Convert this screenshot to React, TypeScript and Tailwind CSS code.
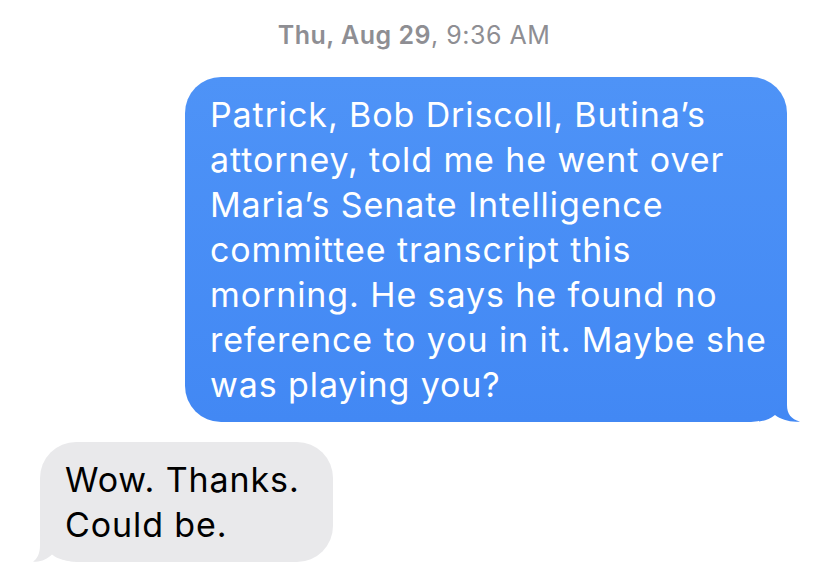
import React from 'react';

const blueLines = [
  'Patrick, Bob Driscoll, Butina\u2019s',
  'attorney, told me he went over',
  'Maria\u2019s Senate Intelligence',
  'committee transcript this',
  'morning. He says he found no',
  'reference to you in it. Maybe she',
  'was playing you?',
];

const grayLines = ['Wow. Thanks.', 'Could be.'];

// Outgoing bubble: blue, right aligned, tail at bottom right
const SentBubble = ({ lines }: { lines: string[] }) => (
  <div className="relative self-end mr-[41px] w-[602px]">
    <svg className="absolute right-[-14px] bottom-0" width="42" height="44" viewBox="0 0 42 44">
      <path d="M0 0 H28 V27 C28 36 32 41 41 43.5 C31 44.5 22 41.5 16 37 C11 41 5 43 0 43.5 Z" fill="#4288f4" />
    </svg>
    <div className="relative rounded-[36px] bg-gradient-to-b from-[#4e93f7] to-[#4288f4] px-[25px] py-[15px] text-white">
      {lines.map((l, i) => (
        <div key={i} className="whitespace-nowrap">{l}</div>
      ))}
    </div>
  </div>
);

// Incoming bubble: gray, left aligned, tail at bottom left
const ReceivedBubble = ({ lines }: { lines: string[] }) => (
  <div className="relative self-start ml-[40px] w-[293px]">
    <svg className="absolute left-[-8px] bottom-0" width="42" height="44" viewBox="0 0 42 44">
      <path d="M42 0 H8 V27 C8 36 5 41 1 43.5 C9 44.5 15 41 20 36.5 C25 41 34 43 42 43.5 Z" fill="#e9e9eb" />
    </svg>
    <div className="relative rounded-[36px] bg-[#e9e9eb] px-[25px] py-[15px] text-black">
      {lines.map((l, i) => (
        <div key={i} className="whitespace-nowrap">{l}</div>
      ))}
    </div>
  </div>
);

export default function App() {
  return (
    <div
      className="w-[828px] h-[579px] bg-white flex flex-col overflow-hidden"
      style={{ fontFamily: 'Inter, "Liberation Sans", sans-serif' }}
    >
      <div className="pt-[20px] h-[77px] text-center text-[25px] leading-[30px] tracking-[0.5px] text-[#8e8e93]">
        <span className="font-semibold">Thu, Aug 29</span>, 9:36 AM
      </div>
      <div className="flex flex-col text-[34px] leading-[45px] tracking-[0.9px]">
        <SentBubble lines={blueLines} />
        <div className="h-[20px]" />
        <ReceivedBubble lines={grayLines} />
      </div>
    </div>
  );
}
